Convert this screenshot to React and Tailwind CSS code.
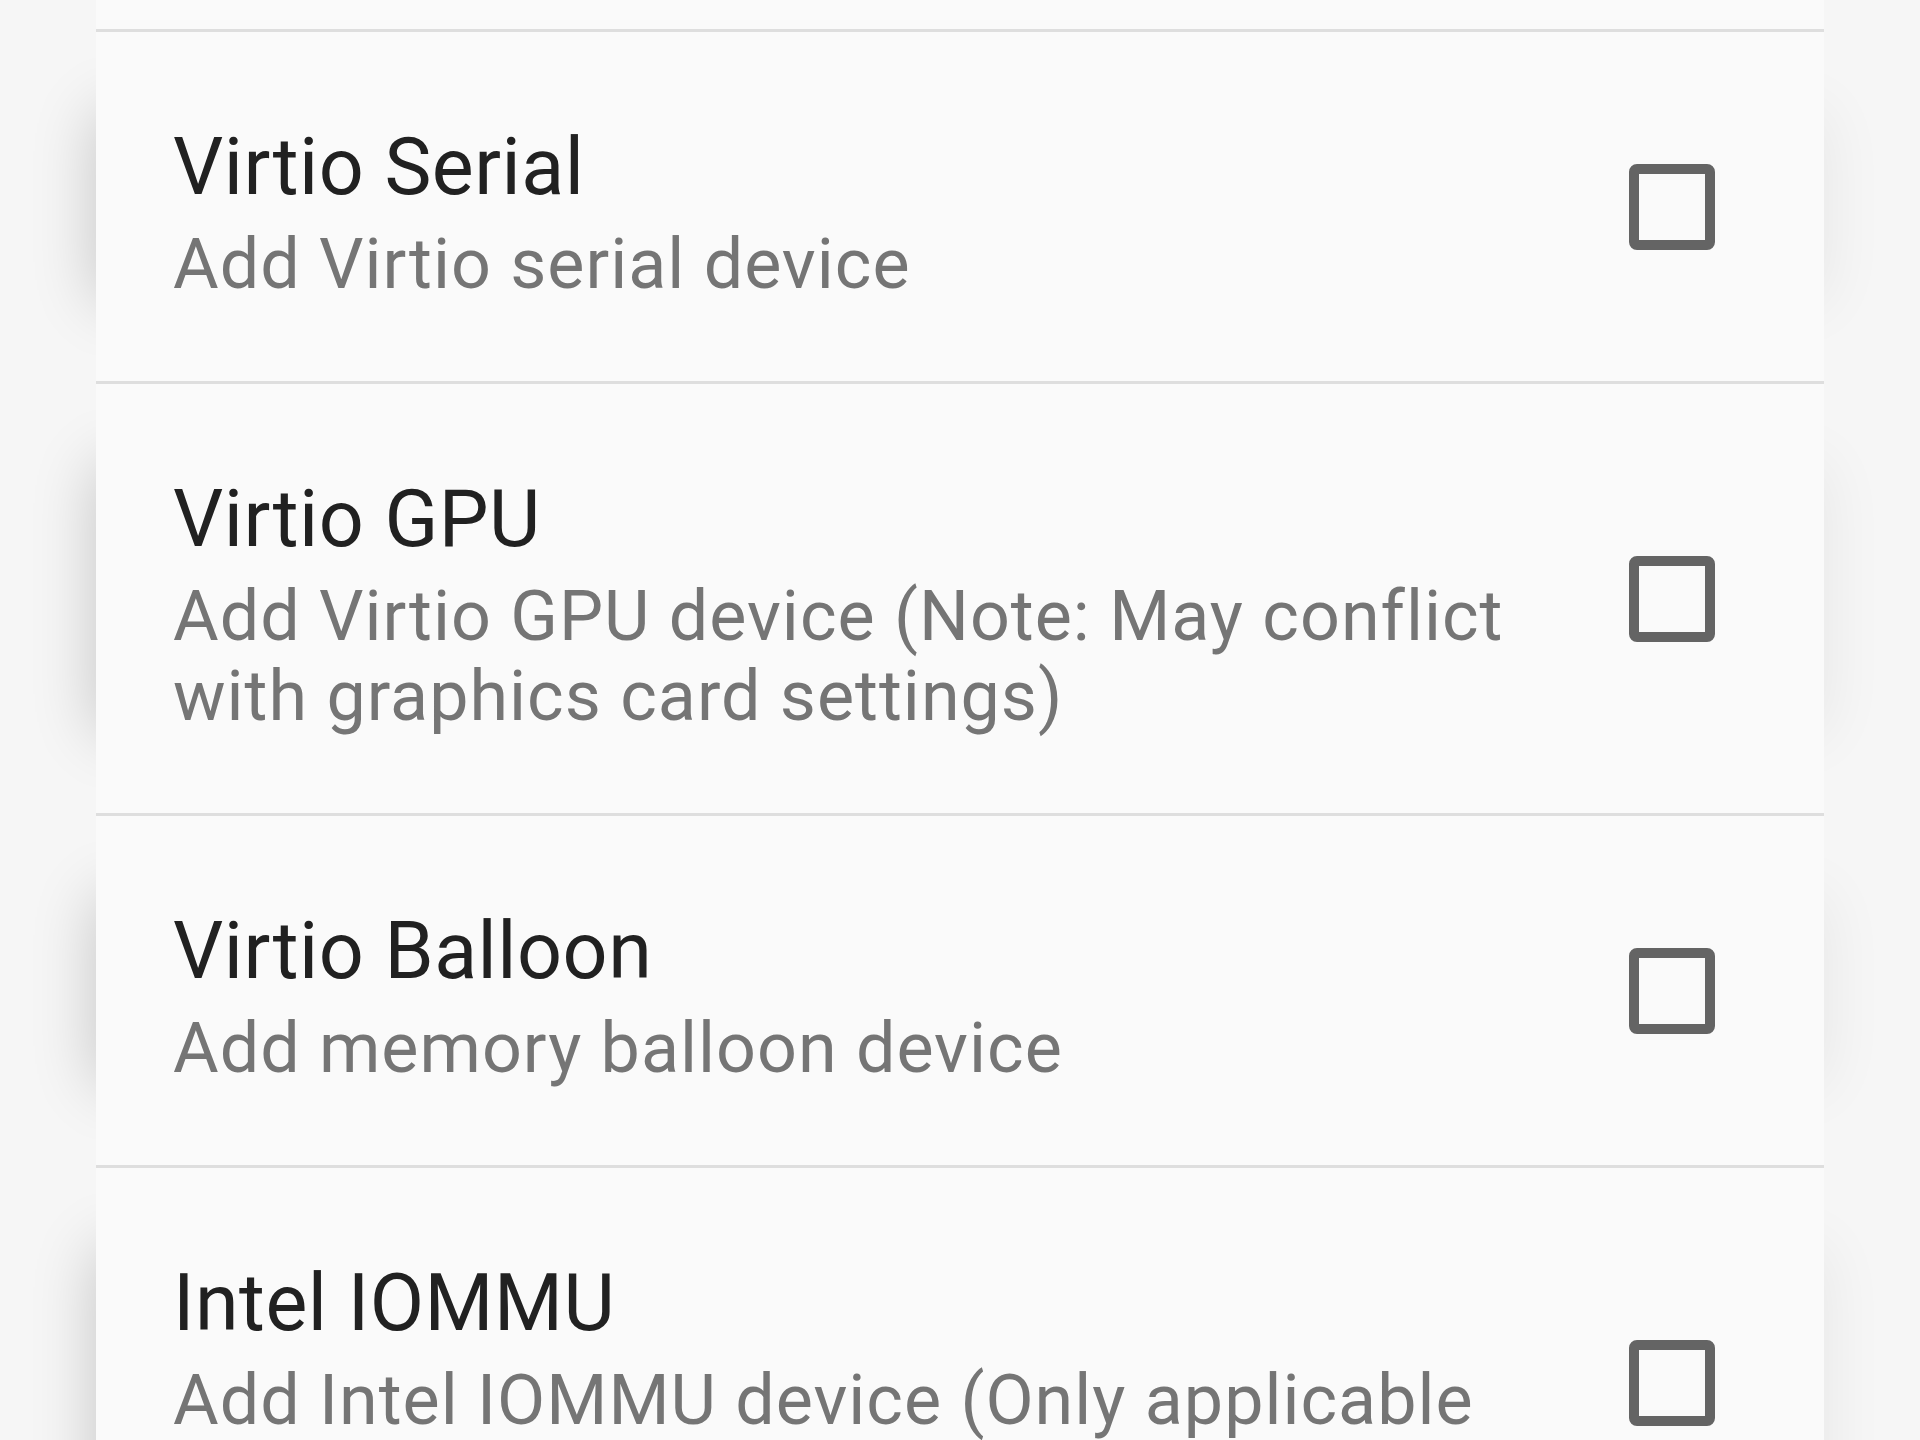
import React from "react";

const items = [
  { title: "Virtio Serial", desc: "Add Virtio serial device" },
  {
    title: "Virtio GPU",
    desc: "Add Virtio GPU device (Note: May conflict with graphics card settings)",
  },
  { title: "Virtio Balloon", desc: "Add memory balloon device" },
  {
    title: "Intel IOMMU",
    desc: "Add Intel IOMMU device (Only applicable for x86_64 guests)",
  },
];

function Row({ title, desc }) {
  return (
    <div className="flex items-center bg-[#fafafa] pl-[77px] pr-[109px] shadow-[-80px_0_60px_-80px_rgba(0,0,0,0.2),80px_0_60px_-80px_rgba(0,0,0,0.07)]">
      <div className="flex-1 pt-[88px] pb-[77px] pr-[68px]">
        <div className="text-[79px] leading-[94px] tracking-[0.5px] text-[#212121]">
          {title}
        </div>
        <div className="mt-[10px] text-[70px] leading-[80px] tracking-[1px] text-[#757575]">
          {desc}
        </div>
      </div>
      <div className="h-[86px] w-[86px] shrink-0 rounded-[8px] border-[10px] border-[#646464]" />
    </div>
  );
}

export default function App() {
  return (
    <div className="h-[1440px] w-[1920px] overflow-hidden bg-[#f6f6f6] px-[96px] font-['Roboto',sans-serif]">
      <div className="flex flex-col">
        <div className="h-[29px] bg-[#fafafa]" />
        {items.map((it) => (
          <React.Fragment key={it.title}>
            <div className="h-[3px] bg-[#dedede]" />
            <Row title={it.title} desc={it.desc} />
          </React.Fragment>
        ))}
      </div>
    </div>
  );
}
